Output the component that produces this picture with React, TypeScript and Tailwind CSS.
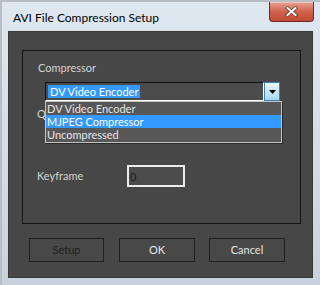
import { useState } from 'react';

export default function App() {
  const [items] = useState(['DV Video Encoder', 'MJPEG Compressor', 'Uncompressed']);
  const selected = 1;

  return (
    <div className="w-[320px] h-[285px] overflow-hidden border-t-2 border-l-2 border-[#b9bec4] bg-gradient-to-b from-[#dfe8f1] via-[#d3dee9] to-[#c7d2dd] flex flex-col font-[Lato,sans-serif]">
      {/* Title bar */}
      <div className="h-[29px] flex items-start justify-between pl-[11px] pr-[6px]">
        <span className="mt-[8px] text-[12px] leading-[15px] text-black">AVI File Compression Setup</span>
        <button className="w-[45px] h-[20px] rounded-b-[4px] border border-[#6b2b22] border-t-0 bg-gradient-to-b from-[#e8a396] via-[#d2624c] to-[#c04a35] flex items-center justify-center shadow-[inset_0_1px_0_rgba(255,255,255,0.4)]">
          <svg width="13" height="11" viewBox="0 0 13 11">
            <path d="M2.5 2 L10.5 9 M10.5 2 L2.5 9" stroke="#6a3a32" strokeWidth="3.6" strokeLinecap="square" />
            <path d="M2.5 2 L10.5 9 M10.5 2 L2.5 9" stroke="#ffffff" strokeWidth="2" strokeLinecap="square" />
          </svg>
        </button>
      </div>

      {/* Client area */}
      <div className="ml-[6px] w-[305px] h-[247px] bg-[#474747] border border-[#3a3a3a] flex flex-col">
        {/* Group box */}
        <div className="relative ml-[13px] mt-[18px] w-[279px] h-[174px] border border-[#141414] flex flex-col">
          <span className="ml-[15px] mt-[10px] text-[11px] leading-[14px] text-[#d4d4d4]">Compressor</span>

          {/* Combo box */}
          <div className="ml-[22px] mt-[7px] w-[235px] h-[19px] flex">
            <div className="flex-1 border-t border-l border-[#121212] border-r-white border-b-white border-r border-b bg-[#4c4c4c] flex items-center pl-[2px]">
              <span className="bg-[#3399ff] text-white text-[11px] leading-[13px] px-[2px]">DV Video Encoder</span>
            </div>
            <div className="w-[16px] border border-[#3c7fb1] bg-gradient-to-b from-[#eaf6fd] to-[#a7d9f5] flex items-center justify-center">
              <svg width="7" height="4" viewBox="0 0 7 4">
                <path d="M0 0 H7 L3.5 4 Z" fill="#000" />
              </svg>
            </div>
          </div>

          <span className="ml-[14px] mt-[6px] text-[11px] leading-[14px] text-[#d4d4d4]">Quality</span>

          {/* Slider */}
          <div className="relative ml-[33px] mt-[6px] h-[16px] w-[244px]">
            <div className="absolute left-[8px] top-[2px] w-[211px] h-[5px] bg-white border-t border-[#9a9a9a]" />
            <div className="absolute left-0 top-0 w-[9px] h-[15px] bg-[#f2f2f2] border border-[#bdbdbd]" />
          </div>

          {/* Keyframe */}
          <div className="mt-[22px] flex items-center">
            <span className="ml-[14px] w-[90px] text-[11px] leading-[14px] text-[#d4d4d4]">Keyframe</span>
            <div className="w-[58px] h-[22px] border-2 border-[#ececec] bg-[#4c4c4c] flex items-center pl-[1px]">
              <span className="text-[11px] leading-[13px] text-[#1e1e1e]">0</span>
            </div>
          </div>

          {/* Dropdown list */}
          <div className="absolute left-[22px] top-[50px] w-[237px] h-[42px] border border-[#c4c4c4] bg-[#575757] flex flex-col shadow-[1px_1px_0_#2a2a2a]">
            {items.map((it, i) => (
              <div
                key={it}
                className={`h-[13px] text-[11px] leading-[13px] pl-[1px] ${i === selected ? 'bg-[#3399ff] text-white' : 'text-[#e4e4e4]'}`}
              >
                {it}
              </div>
            ))}
          </div>
        </div>

        {/* Buttons */}
        <div className="mt-[14px] flex">
          <button className="ml-[20px] w-[75px] h-[24px] border border-[#1f1f1f] bg-[#484848] text-[11px] text-[#1e1e1e]">Setup</button>
          <button className="ml-[15px] w-[76px] h-[24px] border border-[#1f1f1f] bg-[#484848] text-[11px] text-[#e6e6e6]">OK</button>
          <button className="ml-[14px] w-[76px] h-[24px] border border-[#1f1f1f] bg-[#484848] text-[11px] text-[#e6e6e6]">Cancel</button>
        </div>
      </div>
    </div>
  );
}
